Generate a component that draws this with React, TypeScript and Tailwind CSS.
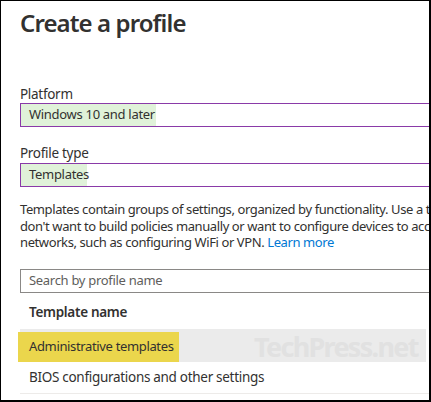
// Intune "Create a profile" blade, cropped screenshot with a frame.

const font = { fontFamily: '"Noto Sans", "Open Sans", Arial, sans-serif' };

function HighlightInput({ value, width }: { value: string; width: string }) {
  return (
    <div className="flex h-[24px] w-[520px] items-stretch border border-[#8a3aa8] bg-white">
      <span
        className={`flex items-center bg-[#e0f2d9] pl-[8px] text-[13px] tracking-[-0.3px] whitespace-nowrap text-[#323130] ${width}`}
      >
        {value}
      </span>
    </div>
  );
}

export default function App() {
  return (
    <div
      className="relative h-[402px] w-[431px] overflow-hidden border-t border-r-2 border-b-2 border-l border-black bg-white"
      style={font}
    >
      <div className="w-[560px] pl-[19px]">
        <h1 className="mt-[6px] text-[24px] font-semibold leading-[32px] tracking-[-0.9px] text-[#323130]">
          Create a profile
        </h1>

        <div className="mt-[46px] text-[13.5px] leading-[18px] tracking-[-0.3px] text-[#323130]">
          Platform
        </div>
        <HighlightInput value="Windows 10 and later" width="w-[135px]" />

        <div className="mt-[17px] text-[13.5px] leading-[18px] tracking-[-0.3px] text-[#323130]">
          Profile type
        </div>
        <div className="mt-[1px]">
          <HighlightInput value="Templates" width="w-[66px]" />
        </div>

        <p className="mt-[14px] text-[13px] leading-[16.5px] tracking-[-0.4px] whitespace-nowrap text-[#323130]">
          Templates contain groups of settings, organized by functionality. Use a template when you
          <br />
          don't want to build policies manually or want to configure devices to access corporate
          <br />
          networks, such as configuring WiFi or VPN.{' '}
          <span className="text-[#0078d4]">Learn more</span>
        </p>

        <div className="mt-[18px] flex h-[24px] w-[520px] items-center border border-[#8a8886] pl-[8px] text-[13px] tracking-[-0.3px] whitespace-nowrap text-[#605e5c]">
          Search by profile name
        </div>

        <div className="mt-[9px] pl-[9px] text-[13.5px] leading-[20px] font-semibold tracking-[-0.3px] text-[#323130]">
          Template name
        </div>

        <div className="relative mt-[7px] h-[33px] w-[406px] bg-[#ebebeb]">
          <span className="absolute top-[3px] left-[-2px] flex h-[30px] w-[161px] items-center bg-[#ebd64c] pl-[11px] text-[13px] tracking-[-0.35px] whitespace-nowrap text-[#323130]">
            Administrative templates
          </span>
          <span className="absolute top-[3px] left-[234px] text-[27px] leading-[30px] font-bold tracking-[-1.7px] whitespace-nowrap text-[#e1e1e1]">
            TechPress.net
          </span>
        </div>

        <div className="flex h-[32px] w-[520px] items-center border-b border-[#edebe9] pl-[9px] text-[13.5px] tracking-[-0.3px] whitespace-nowrap text-[#323130]">
          BIOS configurations and other settings
        </div>
      </div>
    </div>
  );
}
